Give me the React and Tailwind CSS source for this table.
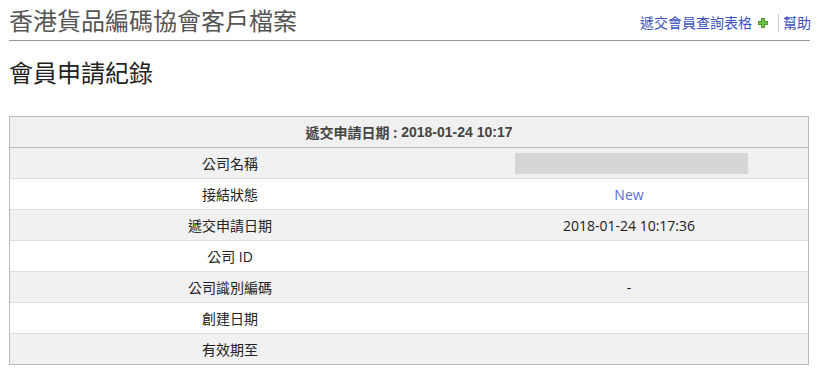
import React from 'react';

const rows = [
  { label: '公司名稱', value: 'blank' },
  { label: '接結狀態', value: 'New', link: true },
  { label: '遞交申請日期', value: '2018-01-24 10:17:36' },
  { label: '公司 ID', value: '' },
  { label: '公司識別編碼', value: '-' },
  { label: '創建日期', value: '' },
  { label: '有效期至', value: '' },
];

const font = { fontFamily: '"Open Sans", "Noto Sans CJK TC", sans-serif' };

const App = () => {
  return (
    <div className="w-[825px] h-[378px] bg-white" style={font}>
      <div className="mx-[9px] w-[801px]">
        <div className="flex items-end justify-between h-[41px] border-b border-[#999] pb-[4px]">
          <h1 className="text-[24px] leading-[30px] text-[#555] font-normal">香港貨品編碼協會客戶檔案</h1>
          <div className="flex items-center text-[14px] leading-[18px] text-[#3b50c0] pb-[4px]">
            <span>遞交會員查詢表格</span>
            <svg width="10" height="10" viewBox="0 0 10 10" className="ml-[6px] mr-[10px]">
              <path d="M3 0h4v3h3v4H7v3H3V7H0V3h3z" fill="#4a9a2a" />
              <path d="M4 1h2v3h3v2H6v3H4V6H1V4h3z" fill="#6cc04a" />
            </svg>
            <span className="border-l border-[#ccc] pl-[4px] -mr-[1px]">幫助</span>
          </div>
        </div>
        <h2 className="mt-[17px] text-[24px] leading-[30px] text-[#222] font-normal">會員申請紀錄</h2>
        <div className="mt-[28px] border border-[#bbb] w-[800px]">
          <div className="h-[31px] bg-[#f0f0f0] border-b border-[#bbb] flex items-center justify-center text-[14px] font-bold text-[#444]">
            <span>遞交申請日期 : </span>
            <span className="ml-[4px]" style={{ fontFamily: '"Liberation Sans", Arial, sans-serif' }}>2018-01-24 10:17</span>
          </div>
          {rows.map((r, i) => (
            <div
              key={r.label}
              className={`flex items-center text-[14px] text-[#222] ${i % 2 === 0 ? 'bg-[#f1f1f1]' : 'bg-white'} ${i < rows.length - 1 ? 'h-[31px] border-b border-[#ddd]' : 'h-[30px]'}`}
            >
              <div className="w-[440px] text-center">{r.label}</div>
              <div className="flex-1 flex justify-center">
                {r.value === 'blank' ? (
                  <div className="w-[233px] h-[21px] bg-[#d6d6d6] ml-[5px]" />
                ) : (
                  <span className={r.link ? 'text-[#5b6fd6]' : ''}>{r.value}</span>
                )}
              </div>
            </div>
          ))}
        </div>
      </div>
    </div>
  );
};

export default App;
